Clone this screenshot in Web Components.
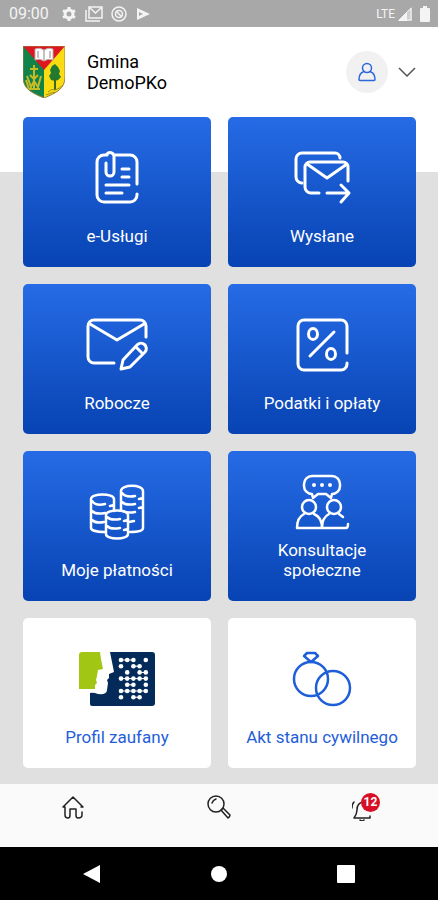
<!DOCTYPE html>
<html lang="pl">
<head>
<meta charset="utf-8">
<meta name="viewport" content="width=device-width, initial-scale=1">
<title>Gmina DemoPKo</title>
<style>
    body {
        margin: 0;
        min-height: 100vh;
        display: flex;
        flex-direction: column;
        font-family: Roboto, "Liberation Sans", sans-serif;
        background: #fff;
    }
    tile-grid { flex: 1; }
    service-tile svg {
        display: block;
        overflow: visible;
        fill: none;
        stroke: currentColor;
        stroke-width: 3;
        stroke-linecap: round;
        stroke-linejoin: round;
    }
</style>
</head>
<body>

<status-bar time="09:00" network="LTE"></status-bar>

<app-header>
    <span>Gmina</span>
    <span>DemoPKo</span>
</app-header>

<tile-grid>
    <service-tile label="e-Usługi">
        <svg width="60" height="56" viewBox="0 0 60 56">
            <path d="M50 34V12a7 7 0 0 0-7-7H28M20 5h-3a7 7 0 0 0-7 7v33a7 7 0 0 0 7 7h26a7 7 0 0 0 7-7v-1"/>
            <path d="M19 13v9a4 4 0 0 0 8 0V6a4 4 0 0 0-7-2"/>
            <path d="M35 19h7M35 27h7M19 35h23M19 43h16"/>
        </svg>
    </service-tile>

    <service-tile label="Wysłane">
        <svg width="60" height="56" viewBox="0 0 60 56">
            <path d="M48 8a5 5 0 0 0-5-5H10a6 6 0 0 0-6 6v18a6 6 0 0 0 6 6"/>
            <path d="M56 31V17a5 5 0 0 0-5-5H18a5 5 0 0 0-5 5v20a6 6 0 0 0 6 6h8"/>
            <path d="M15 14l20 14 20-14M35 43h21M49 35l8 8-8 9"/>
        </svg>
    </service-tile>

    <service-tile label="Robocze">
        <svg width="60" height="56" viewBox="0 0 60 56">
            <path d="M59 20V9a6 6 0 0 0-6-6H7a6 6 0 0 0-6 6v31a6 6 0 0 0 6 6h20"/>
            <path d="M3 7l27 16L57 7"/>
            <path d="M34 52l2-9 14-15a5 5 0 0 1 8 7L43 50zM49 30l7 7"/>
        </svg>
    </service-tile>

    <service-tile label="Podatki i opłaty">
        <svg width="60" height="56" viewBox="0 0 60 56">
            <path d="M55 36V9a6 6 0 0 0-6-6H12a6 6 0 0 0-6 6v38a6 6 0 0 0 6 6h37a6 6 0 0 0 6-6v-1"/>
            <ellipse cx="21" cy="17" rx="4.5" ry="5.5"/>
            <ellipse cx="39" cy="37" rx="4.5" ry="5.5"/>
            <path d="M18 39l24-24"/>
        </svg>
    </service-tile>

    <service-tile label="Moje płatności">
        <svg width="60" height="56" viewBox="0 0 60 56" style="stroke-width:2.5">
            <path d="M4 15c0-6 23-6 23 0v12M4 15v29c0 2 5 4 14 4M5 17c3 4 9 4 13 3M5 27c3 3 8 3 13 2M5 36c3 3 7 3 12 2M23 22l4-1"/>
            <path d="M34 7c0-7 22-7 22 0v37c0 3-5 4-13 4M34 7v19M35 9c3 4 8 4 13 3M35 18c3 3 8 3 13 2M36 27c3 2 7 2 12 1M42 38l5-1M52 15l4-1M52 24l4-1"/>
            <path d="M19 31c0-6 22-6 22 0v19c0 6-22 6-22 0zM20 33c3 3 8 3 13 2M20 42c3 3 8 3 13 2M37 37l4-1M37 46l4-1"/>
        </svg>
    </service-tile>

    <service-tile label="Konsultacje społeczne">
        <svg width="60" height="56" viewBox="0 0 60 56" style="stroke-width:2.5">
            <path d="M20 2h20a8 8 0 0 1 8 8v2a8 8 0 0 1-8 8l-1 4-5-4h-8l-5 4-1-4a8 8 0 0 1-8-8v-2a8 8 0 0 1 8-8z"/>
            <path d="M22 11h0M30 11h0M38 11h0" style="stroke-width:4"/>
            <circle cx="17" cy="33" r="7"/>
            <circle cx="42" cy="33" r="7"/>
            <path d="M12 40c-4 2-7 6-7 14h25c0-8-3-12-8-14M37 40c-4 2-7 6-7 14h24q2 0 2-4M47 40l4 3"/>
        </svg>
    </service-tile>

    <service-tile label="Profil zaufany" light>
        <svg width="76" height="56" viewBox="0 0 76 56" style="stroke:none">
            <path fill="#a2c614" d="M3 1H21L22 8 24 18 19 19 18 25 17 29 18 32 16 34V38H0V4Q0 1 3 1z"/>
            <path fill="#032a59" d="M31 1H73Q76 1 76 4V52Q76 55 73 55H13Q11 55 11 53V42Q14 41 19 43 28 44 28 39L29 32 28 29 30 27V23L35 21z"/>
            <g fill="#fff" id="dots"></g>
        </svg>
    </service-tile>

    <service-tile label="Akt stanu cywilnego" light>
        <svg width="60" height="56" viewBox="0 0 60 56" style="stroke-width:2.5">
            <circle cx="19" cy="28" r="17"/>
            <circle cx="41" cy="37" r="17"/>
            <path d="M15 2h8l3 3-7 6-7-6z"/>
        </svg>
    </service-tile>
</tile-grid>

<tab-bar count="12"></tab-bar>
<system-nav></system-nav>

<script>
    //base for every component: markup + styles go to an open shadow root
    class BaseElement extends HTMLElement {
        render(html) {
            const shadow = this.attachShadow({mode: 'open'})
            const template = document.createElement('template')
            template.innerHTML = html
            shadow.appendChild(template.content.cloneNode(true))
        }
    }

    //top bar of the phone--------------------------------
    class StatusBar extends BaseElement {
        connectedCallback() {
            this.render(`
                <style>
                    :host {
                        display: flex;
                        align-items: center;
                        height: 27px;
                        padding: 0 8px 0 9px;
                        background: #a8a8a8;
                        color: #f4f4f4;
                        font-size: 16px;
                    }
                    .icons { display: flex; flex: 1; align-items: center; gap: 8px; margin-left: 12px; }
                    .network { font-size: 12px; }
                    svg { display: block; }
                    .signal { margin: 0 8px 0 3px; }
                </style>
                <span>${this.getAttribute('time')}</span>
                <div class="icons">
                    <svg width="16" height="16" viewBox="0 0 16 16" fill="none" stroke="currentColor">
                        <circle cx="8" cy="8" r="4" stroke-width="3"/>
                        <path d="M8 1v2M8 13v2M2 4.5l2 1M12 10.5l2 1M2 11.5l2-1M12 5.5l2-1" stroke-width="3"/>
                    </svg>
                    <svg width="18" height="16" viewBox="0 0 18 16" fill="none" stroke="currentColor" stroke-width="1.5">
                        <path d="M1 4v11h14"/>
                        <path d="M4 1h13v11H4zM5 2l5.500 5L16 2"/>
                    </svg>
                    <svg width="16" height="16" viewBox="0 0 16 16" fill="none" stroke="currentColor" stroke-width="1.5">
                        <circle cx="8" cy="8" r="7"/>
                        <circle cx="8" cy="8" r="3.5"/>
                        <path d="M5 5l6 6"/>
                    </svg>
                    <svg width="16" height="16" viewBox="0 0 16 16" fill="currentColor">
                        <path d="M2 2l13 6-13 6zM4 6v4l4-2z" fill-rule="evenodd"/>
                    </svg>
                </div>
                <span class="network">${this.getAttribute('network')}</span>
                <svg class="signal" width="14" height="14" viewBox="0 0 14 14">
                    <path d="M14 0v14H0z" fill="#d0d0d0"/>
                    <path d="M9 5v9H0z" fill="currentColor"/>
                    <path d="M13 1v12H1z" fill="none" stroke="currentColor"/>
                </svg>
                <svg width="10" height="16" viewBox="0 0 10 16" fill="currentColor">
                    <path d="M3 0h4v2h2q1 0 1 1v12q0 1-1 1H1q-1 0-1-1V3q0-1 1-1h2z"/>
                </svg>
            `)
        }
    }

    //crest, name of the commune and the account buttons--
    class AppHeader extends BaseElement {
        connectedCallback() {
            this.render(`
                <style>
                    :host {
                        display: flex;
                        align-items: center;
                        height: 90px;
                        padding: 0 22px 0 23px;
                        background: #fff;
                        color: #000;
                    }
                    h1 {
                        display: flex;
                        flex-direction: column;
                        flex: 1;
                        margin: 0 0 0 22px;
                        font-size: 18px;
                        font-weight: 400;
                        line-height: 21px;
                    }
                    button { padding: 0; border: 0; background: none; cursor: pointer; }
                    .account {
                        display: grid;
                        place-items: center;
                        width: 42px;
                        height: 42px;
                        margin-right: 10px;
                        border-radius: 50%;
                        background: #f1f1f1;
                    }
                    svg { display: block; fill: none; }
                </style>
                <svg width="42" height="52" viewBox="0 0 42 52" role="img" aria-label="Herb">
                    <clipPath id="shield"><path d="M0 0h42v31c0 12-9 16-21 21C9 47 0 43 0 31z"/></clipPath>
                    <g clip-path="url(#shield)">
                        <path fill="#11834a" d="M0 0h21v52H0z"/>
                        <path fill="#fbdc12" d="M21 0h21v52H21z"/>
                        <path fill="#dd1620" d="M0 0h42L21 24z"/>
                        <path fill="#fff" stroke="#b9a9a9" d="M12 3q5-2 9 1 4-3 9-1v11q-5-2-9 1-4-3-9-1z"/>
                        <path stroke="#8f8080" d="M21 4v10M15 5v7M27 5v7"/>
                        <path stroke="#c6ba25" stroke-width="2" d="M11 19v25M7 23h8M4 30l4 11 3-6 4 6 3-11M3 34l3 9h11M7 29l4 4 4-4"/>
                        <path fill="#217a2f" d="M32 18l3 3 2 4-1 3 2 3-3 3-3 1-4-1-2-4 2-3-1-3 2-4z"/>
                        <path stroke="#366b20" stroke-width="2" d="M32 31v13"/>
                        <path stroke="#96911a" d="M25 46q4-4 7-2 4-1 8-5M23 49q6-3 12-3"/>
                    </g>
                    <path stroke="#9a8240" d="M0 0h42v31c0 12-9 16-21 21C9 47 0 43 0 31z"/>
                </svg>
                <h1><slot></slot></h1>
                <button class="account" aria-label="Konto">
                    <svg width="18" height="20" viewBox="0 0 18 20" stroke="#2b67dc" stroke-width="1.5" stroke-linecap="round" stroke-linejoin="round">
                        <circle cx="9" cy="6" r="4.5"/>
                        <path d="M6 9.5c-3 1-5 4-5 8 0 .5.5 1 1 1h14c.5 0 1-.5 1-1 0-4-2-7-5-8"/>
                    </svg>
                </button>
                <button aria-label="Rozwiń">
                    <svg width="18" height="10" viewBox="0 0 18 10" stroke="#555" stroke-width="1.5">
                        <path d="M1 1l8 8 8-8"/>
                    </svg>
                </button>
            `)
        }
    }

    //two columns of tiles, the top of the grid lies on white
    class TileGrid extends BaseElement {
        connectedCallback() {
            this.render(`
                <style>
                    :host {
                        display: grid;
                        grid-template-columns: 1fr 1fr;
                        align-content: start;
                        gap: 17px;
                        padding: 0 22px 16px 23px;
                        background: linear-gradient(#fff 55px, #e0e0e0 55px);
                    }
                </style>
                <slot></slot>
            `)
        }
    }

    //one tile: icon in the slot, text in the label-------
    class ServiceTile extends BaseElement {
        connectedCallback() {
            this.render(`
                <style>
                    :host { display: block; min-width: 0; }
                    button {
                        display: flex;
                        flex-direction: column;
                        align-items: center;
                        width: 100%;
                        height: 150px;
                        padding: 12px 32px 21px;
                        border: 0;
                        border-radius: 5px;
                        background: linear-gradient(#266be5, #0743b3);
                        color: #fff;
                        font: 17px/20px Roboto, "Liberation Sans", sans-serif;
                        cursor: pointer;
                    }
                    :host([light]) button {
                        padding-left: 12px;
                        padding-right: 12px;
                        background: #fff;
                        color: #1f5ed9;
                    }
                    .icon { display: grid; place-items: center; flex: 1; }
                </style>
                <button>
                    <span class="icon"><slot></slot></span>
                    <span>${this.getAttribute('label')}</span>
                </button>
            `)
        }
    }

    //app navigation--------------------------------------
    class TabBar extends BaseElement {
        connectedCallback() {
            this.render(`
                <style>
                    :host { display: block; background: #fafafa; }
                    nav {
                        display: grid;
                        grid-template-columns: repeat(3, 1fr);
                        justify-items: center;
                        align-items: start;
                        height: 63px;
                        padding-top: 11px;
                        box-sizing: border-box;
                    }
                    a { position: relative; color: #222; text-decoration: none; }
                    svg { display: block; fill: none; stroke: currentColor; stroke-width: 1.5; stroke-linecap: round; stroke-linejoin: round; }
                    .badge {
                        position: absolute;
                        top: -2px;
                        right: -2px;
                        width: 19px;
                        border-radius: 50%;
                        background: #d90f25;
                        color: #fff;
                        font-size: 12px;
                        font-weight: 700;
                        line-height: 19px;
                        text-align: center;
                    }
                </style>
                <nav>
                    <a href="#start" aria-label="Start">
                        <svg width="24" height="24" viewBox="0 0 24 24">
                            <path d="M2 12L12 2l10 10h-2M2 12h2v8q0 3 3 3 2 0 2-3v-6h6v6q0 3 2 3 4 0 4-3v-3"/>
                        </svg>
                    </a>
                    <a href="#szukaj" aria-label="Szukaj">
                        <svg width="24" height="24" viewBox="0 0 24 24">
                            <circle cx="9" cy="9" r="8"/>
                            <path d="M5 8q1-3 4-4M14 15l2-2 7 7q0 2-2 3z"/>
                        </svg>
                    </a>
                    <a href="#powiadomienia" aria-label="Powiadomienia">
                        <svg width="26" height="26" viewBox="0 0 26 26">
                            <path d="M2 23h16v-2M2 23q3-4 3-8 0-7 6-8M8 25q2 2 4 0M0 13q0-4 2-6"/>
                        </svg>
                        <span class="badge">${this.getAttribute('count')}</span>
                    </a>
                </nav>
            `)
        }
    }

    //android buttons-------------------------------------
    class SystemNav extends BaseElement {
        connectedCallback() {
            this.render(`
                <style>
                    :host {
                        display: grid;
                        grid-template-columns: repeat(3, 1fr);
                        place-items: center;
                        height: 53px;
                        padding: 0 29px;
                        background: #000;
                    }
                    button { padding: 0; border: 0; background: none; }
                    svg { display: block; fill: #fff; }
                </style>
                <button aria-label="Wstecz"><svg width="18" height="18" viewBox="0 0 18 18"><path d="M17 0v18L0 9z"/></svg></button>
                <button aria-label="Ekran główny"><svg width="18" height="18" viewBox="0 0 18 18"><circle cx="9" cy="9" r="8"/></svg></button>
                <button aria-label="Ostatnie"><svg width="18" height="18" viewBox="0 0 18 18"><rect width="18" height="18" rx="1"/></svg></button>
            `)
        }
    }

    customElements.define('status-bar', StatusBar)
    customElements.define('app-header', AppHeader)
    customElements.define('tile-grid', TileGrid)
    customElements.define('service-tile', ServiceTile)
    customElements.define('tab-bar', TabBar)
    customElements.define('system-nav', SystemNav)

    //dot matrix of the Profil zaufany logo, "-" joins two dots
    const rows = ['o-o-o   o', 'o   o-o  ', '  o   o-o', 'o-o-o-o-o', '  o-o   o', 'o-o-o-o-o', 'o   o-o  ']
    let dots = ''
    rows.forEach((row, y) => {
        [...row].forEach((char, x) => {
            const cx = 42 + x * 3.1
            const cy = 9 + y * 6.2
            if (char === 'o') dots += `<circle cx="${cx}" cy="${cy}" r="2.3"/>`
            if (char === '-') dots += `<rect x="${cx - 2}" y="${cy - 0.5}" width="4" height="1"/>`
        })
    })
    document.getElementById('dots').innerHTML = dots
</script>
</body>
</html>
